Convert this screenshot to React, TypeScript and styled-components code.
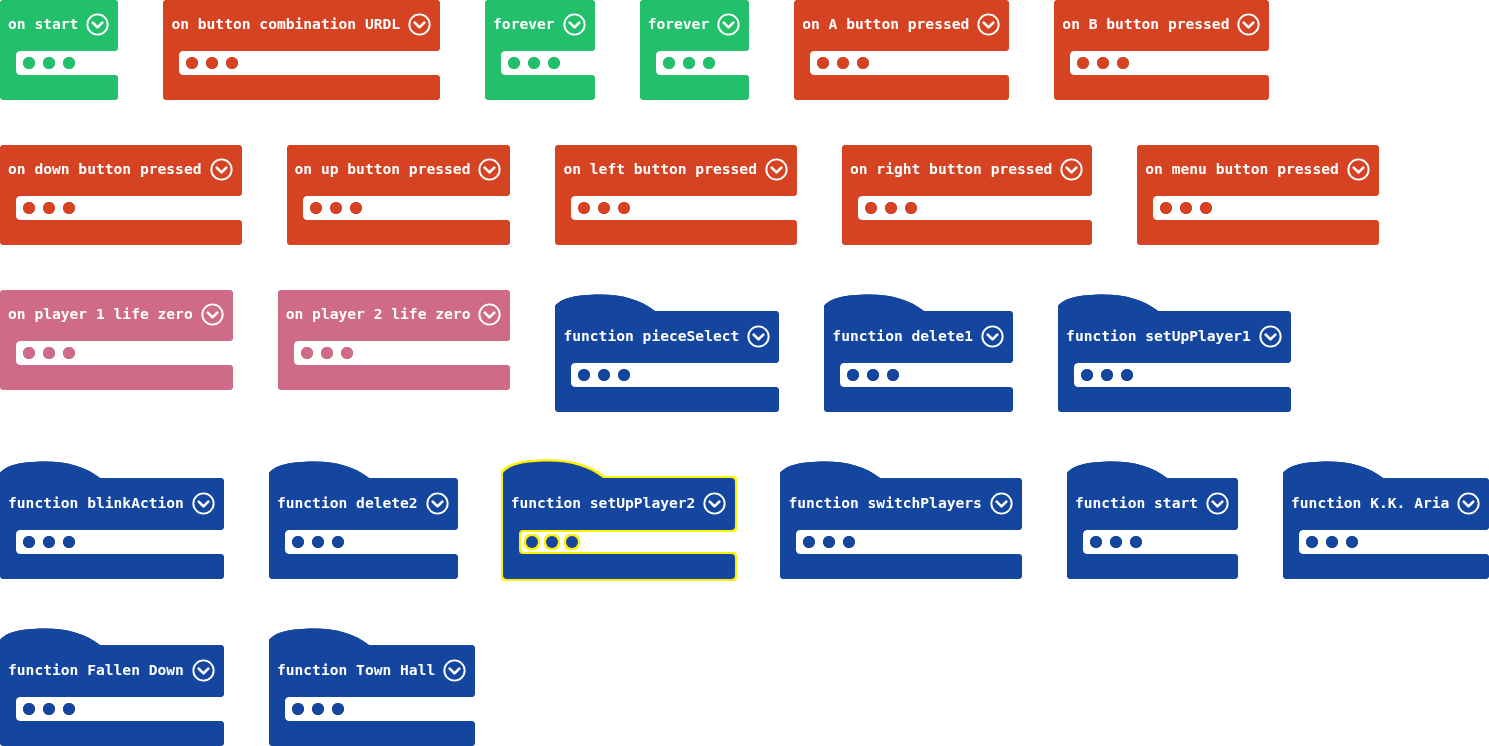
import styled, { createGlobalStyle, css } from 'styled-components';

//== type ==//
type Kind = 'loops' | 'controller' | 'info' | 'functions';

interface BlockData {
    kind: Kind,
    label: string,
    selected?: boolean
}

const palette: Record<Kind, { fill: string; edge: string }> = {
    loops: { fill: '#22c06b', edge: '#1a9854' },
    controller: { fill: '#d54322', edge: '#a9351b' },
    info: { fill: '#cf6a87', edge: '#a5546b' },
    functions: { fill: '#15469f', edge: '#0f357a' },
};

const SELECT = '#fff200';

//== style ==//
const GlobalStyle = createGlobalStyle`
    html, body {
        margin: 0;
        padding: 0;
        background: #ffffff;
    }

    body {
        width: 1489px;
        height: 746px;
        overflow: hidden;
    }
`;

const Workspace = styled.div`
    display: flex;
    flex-direction: column;
    gap: 45px;
    font-family: "DejaVu Sans Mono", "Liberation Mono", monospace;
`;

const Row = styled.div`
    display: flex;
    align-items: flex-start;
    gap: 45px;
`;

const Block = styled.div<{ $kind: Kind, $selected?: boolean }>`
    display: flex;
    flex-direction: column;
    flex: none;
    color: ${props => palette[props.$kind].fill};

    ${props => props.$selected
        ? css`
            filter: drop-shadow(2px 0 0 ${SELECT}) drop-shadow(-2px 0 0 ${SELECT})
                    drop-shadow(0 2px 0 ${SELECT}) drop-shadow(0 -2px 0 ${SELECT});
        `
        : css`
            filter: drop-shadow(0 0 0.5px ${palette[props.$kind].edge});
        `}
`;

// the rounded cap on top of a function definition
const Hat = styled.svg`
    display: block;
    width: 100px;
    height: 21px;
`;

const Header = styled.div<{ $hat?: boolean }>`
    display: flex;
    align-items: center;
    gap: 8px;
    height: ${props => props.$hat ? '52px' : '51px'};
    padding: 0 9px 2px 8px;
    box-sizing: border-box;
    background: currentColor;
    border-radius: ${props => props.$hat ? '0 4px 4px 0' : '4px 4px 4px 0'};
`;

const Label = styled.span`
    color: #ffffff;
    font-weight: bold;
    font-size: 14.62px;
    line-height: 1;
    white-space: pre;
`;

const DropIcon = styled.svg`
    display: block;
    flex: none;
    width: 23px;
    height: 23px;
`;

// statement mouth: the spine on the left, open to the right
const Mouth = styled.div`
    display: flex;
    height: 24px;
    padding-left: 16px;
    overflow: hidden;
`;

const Slot = styled.div`
    flex: 1;
    display: flex;
    align-items: center;
    gap: 8px;
    padding-left: 7px;
    border-radius: 4px 0 0 4px;
    box-shadow: 0 0 0 24px currentColor;
`;

const Dot = styled.span`
    width: 12px;
    height: 12px;
    border-radius: 50%;
    background: currentColor;
`;

const Foot = styled.div`
    height: 25px;
    background: currentColor;
    border-radius: 0 4px 4px 4px;
`;

//== data ==//
const rows: BlockData[][] = [
    [
        { kind: 'loops', label: 'on start' },
        { kind: 'controller', label: 'on button combination URDL' },
        { kind: 'loops', label: 'forever' },
        { kind: 'loops', label: 'forever' },
        { kind: 'controller', label: 'on A button pressed' },
        { kind: 'controller', label: 'on B button pressed' },
    ],
    [
        { kind: 'controller', label: 'on down button pressed' },
        { kind: 'controller', label: 'on up button pressed' },
        { kind: 'controller', label: 'on left button pressed' },
        { kind: 'controller', label: 'on right button pressed' },
        { kind: 'controller', label: 'on menu button pressed' },
    ],
    [
        { kind: 'info', label: 'on player 1 life zero' },
        { kind: 'info', label: 'on player 2 life zero' },
        { kind: 'functions', label: 'function pieceSelect' },
        { kind: 'functions', label: 'function delete1' },
        { kind: 'functions', label: 'function setUpPlayer1' },
    ],
    [
        { kind: 'functions', label: 'function blinkAction' },
        { kind: 'functions', label: 'function delete2' },
        { kind: 'functions', label: 'function setUpPlayer2', selected: true },
        { kind: 'functions', label: 'function switchPlayers' },
        { kind: 'functions', label: 'function start' },
        { kind: 'functions', label: 'function K.K. Aria' },
    ],
    [
        { kind: 'functions', label: 'function Fallen Down' },
        { kind: 'functions', label: 'function Town Hall' },
    ],
];

//== component ==//
const CollapseIcon = () => (
    <DropIcon viewBox="0 0 24 24">
        <circle cx="12" cy="12" r="10.6" fill="none" stroke="#ffffff" strokeWidth="2" />
        <path d="M7 10 L12 15 L17 10" fill="none" stroke="#ffffff" strokeWidth="2.8"
            strokeLinecap="round" strokeLinejoin="round" />
    </DropIcon>
);

const EventBlock = ({ kind, label, selected }: BlockData) => {
    const hat = kind === 'functions';
    return (
        <Block $kind={kind} $selected={selected}>
            {hat && (
                <Hat viewBox="0 0 100 21">
                    <path d="M0 21 V16 C6 8 22 4.5 45 4.5 C68 4.5 86 10 100 21 Z" fill="currentColor" />
                </Hat>
            )}
            <Header $hat={hat}>
                <Label>{label}</Label>
                <CollapseIcon />
            </Header>
            <Mouth>
                <Slot>
                    <Dot />
                    <Dot />
                    <Dot />
                </Slot>
            </Mouth>
            <Foot />
        </Block>
    );
};

export default function App() {
    return (
        <>
            <GlobalStyle />
            <Workspace>
                {rows.map((row, i) => (
                    <Row key={i}>
                        {row.map((b, j) => <EventBlock key={j} {...b} />)}
                    </Row>
                ))}
            </Workspace>
        </>
    );
}
